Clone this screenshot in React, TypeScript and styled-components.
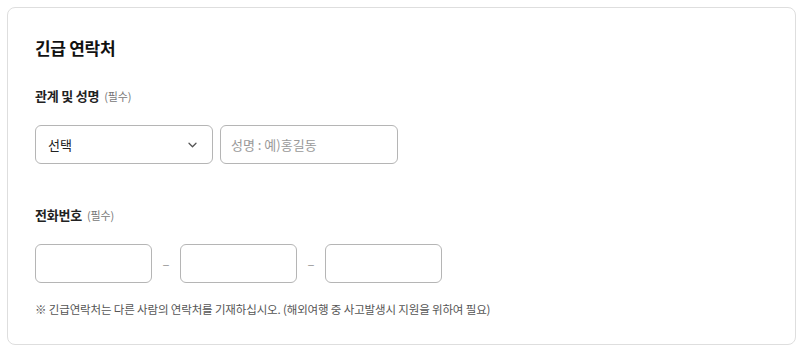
import React from 'react'
import styled, { createGlobalStyle } from 'styled-components'

const GlobalStyle = createGlobalStyle`
    html, body {
        margin: 0;
        padding: 0;
        background: #fff;
    }
    body {
        font-family: 'Noto Sans CJK KR', 'Noto Sans', sans-serif;
        color: #222;
    }
    * {
        box-sizing: border-box;
    }
`

const Page = styled.div`
    padding: 7px 4px 4px 7px;
`

const Card = styled.section`
    width: 789px;
    height: 338px;
    border: 1px solid #dedede;
    border-radius: 8px;
    padding: 28px 27px 0 27px;
`

const Title = styled.h2`
    margin: 0;
    font-size: 17px;
    font-weight: 700;
    line-height: 24px;
    letter-spacing: -0.3px;
    color: #111;
`

const Field = styled.div<{ $top: number }>`
    margin-top: ${(p) => p.$top}px;
`

const Label = styled.div`
    font-size: 13px;
    font-weight: 700;
    line-height: 18px;
    color: #222;
    letter-spacing: -0.2px;
`

const Required = styled.span`
    margin-left: 5px;
    font-size: 11px;
    font-weight: 400;
    color: #777;
`

const Row = styled.div`
    display: flex;
    align-items: center;
    margin-top: 20px;
`

const Select = styled.div`
    width: 178px;
    height: 39px;
    border: 1px solid #b5b5b5;
    border-radius: 6px;
    display: flex;
    align-items: center;
    justify-content: space-between;
    padding: 0 15px 0 12px;
    font-size: 13px;
    color: #222;
`

const Input = styled.input<{ $width: number }>`
    width: ${(p) => p.$width}px;
    height: 39px;
    border: 1px solid #b5b5b5;
    border-radius: 6px;
    padding: 0 10px;
    font-family: inherit;
    font-size: 13px;
    color: #222;
    outline: none;
    &::placeholder {
        color: #999;
    }
`

const NameInput = styled(Input)`
    margin-left: 7px;
`

const Dash = styled.span`
    width: 28px;
    text-align: center;
    font-size: 13px;
    color: #999;
`

const Note = styled.p`
    margin: 18px 0 0;
    font-size: 11.5px;
    line-height: 16px;
    color: #555;
    letter-spacing: -0.15px;
`

const Chevron = () => (
    <svg width="9" height="6" viewBox="0 0 9 6" fill="none">
        <path d="M1 1.2l3.5 3.5 3.5-3.5" stroke="#555" strokeWidth="1.3" strokeLinecap="round" strokeLinejoin="round" />
    </svg>
)

export default function App() {
    return (
        <Page>
            <GlobalStyle />
            <Card>
                <Title>긴급 연락처</Title>
                <Field $top={27}>
                    <Label>
                        관계 및 성명<Required>(필수)</Required>
                    </Label>
                    <Row>
                        <Select>
                            <span>선택</span>
                            <Chevron />
                        </Select>
                        <NameInput $width={178} placeholder="성명 : 예)홍길동" />
                    </Row>
                </Field>
                <Field $top={42}>
                    <Label>
                        전화번호<Required>(필수)</Required>
                    </Label>
                    <Row>
                        <Input $width={117} />
                        <Dash>–</Dash>
                        <Input $width={117} />
                        <Dash>–</Dash>
                        <Input $width={117} />
                    </Row>
                </Field>
                <Note>※ 긴급연락처는 다른 사람의 연락처를 기재하십시오. (해외여행 중 사고발생시 지원을 위하여 필요)</Note>
            </Card>
        </Page>
    )
}
